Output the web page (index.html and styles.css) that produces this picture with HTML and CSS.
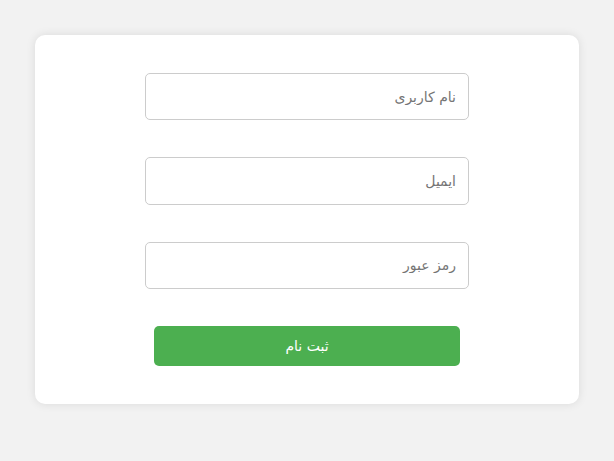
FILE: index.html
```html
<!DOCTYPE html>
<html lang="fa" dir="rtl">
<head>
<meta charset="utf-8">
<link rel="stylesheet" href="styles.css">
</head>
<body>
<div class="page">
  <form class="card">
    <input class="field" type="text" placeholder="نام کاربری">
    <input class="field" type="email" placeholder="ایمیل">
    <input class="field" type="password" placeholder="رمز عبور">
    <button class="submit" type="button">ثبت نام</button>
  </form>
</div>
</body>
</html>
```
FILE: styles.css
```css
html, body {
  margin: 0;
  padding: 0;
  background: #f2f2f2;
}
body {
  font-family: "DejaVu Sans", sans-serif;
}
.page {
  padding: 35px 35px;
  display: flex;
  justify-content: center;
}
.card {
  width: 544px;
  box-sizing: border-box;
  background: #fff;
  border-radius: 10px;
  box-shadow: 0 0 10px rgba(0, 0, 0, 0.1);
  padding: 38px 0 38px;
  display: flex;
  flex-direction: column;
  align-items: center;
  gap: 37px;
}
.field {
  width: 324px;
  height: 47.4px;
  box-sizing: border-box;
  border: 1px solid #ccc;
  border-radius: 5px;
  padding: 0 12px;
  font-family: "DejaVu Sans", sans-serif;
  font-size: 14px;
  text-align: right;
  direction: rtl;
  outline: none;
  background: #fff;
}
.field::placeholder {
  color: #757575;
}
.submit {
  width: 306px;
  height: 40px;
  border: none;
  border-radius: 5px;
  background: #4caf50;
  color: #fff;
  font-family: "DejaVu Sans", sans-serif;
  font-size: 14px;
  cursor: pointer;
}
```
